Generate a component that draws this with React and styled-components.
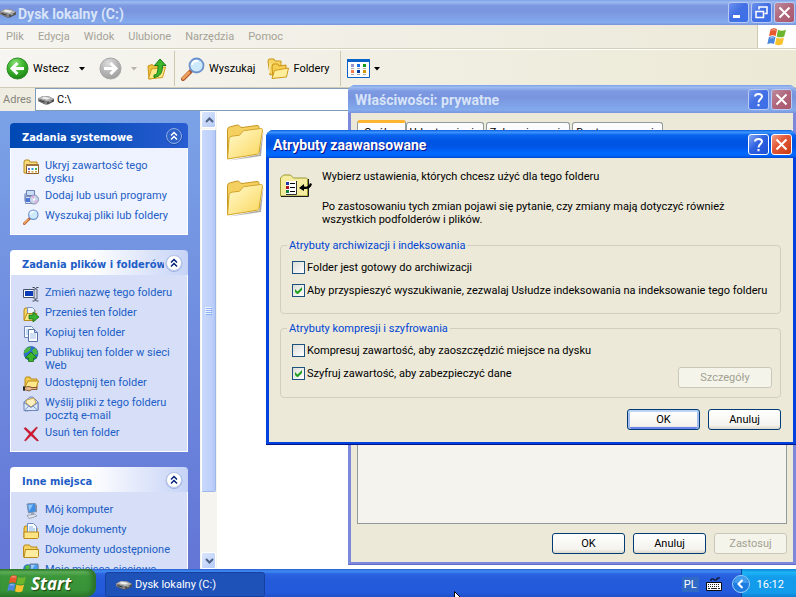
import React, { useState } from 'react'
import styled, { createGlobalStyle, css } from 'styled-components'

const uiFont = 'Roboto, "DejaVu Sans Condensed", sans-serif'
const headingFont = '"DejaVu Sans Condensed", "DejaVu Sans", sans-serif'
const titleFont = 'Roboto, "Open Sans", sans-serif'
const startFont = '"Open Sans", "Noto Sans", sans-serif'

const GlobalStyle = createGlobalStyle`
    * {
        box-sizing: border-box;
    }
    body {
        margin: 0;
        overflow: hidden;
        font-family: ${uiFont};
        font-size: 11px;
        line-height: 13px;
        color: #000000;
    }
    button, input {
        font: inherit;
        color: inherit;
    }
    svg {
        display: block;
        flex-shrink: 0;
    }
    p, h2, ul {
        margin: 0;
        padding: 0;
    }
`

const Desktop = styled.div`
    position: relative;
    height: 100vh;
    display: flex;
    flex-direction: column;
    overflow: hidden;
    background: #ffffff;
`

/* ---------- explorer window ---------- */

const Explorer = styled.main`
    flex: 1;
    min-height: 0;
    display: flex;
    flex-direction: column;
`

const TitleBar = styled.header`
    display: flex;
    align-items: center;
    flex-shrink: 0;
    gap: 2px;
    height: ${(props) => (props.$main ? 25 : 28)}px;
    padding: 0 ${(props) => (props.$main ? 1 : 4)}px 0 ${(props) => (props.$main ? 0 : 7)}px;
    border-radius: ${(props) => (props.$main ? '0' : '7px 7px 0 0')};
    font-family: ${titleFont};
    color: ${(props) => (props.$active ? '#ffffff' : '#d8e4f8')};
    text-shadow: ${(props) => (props.$active ? '1px 1px 0 #0f1089' : 'none')};
    background: ${(props) => props.$active
        ? 'linear-gradient(#0a5be0, #3c96ff 8%, #0a64ee 18%, #0054e3 40%, #0055e5 60%, #0067ff 80%, #0066fb 92%, #0046d0)'
        : 'linear-gradient(#7ba0ea, #9dbcf0 8%, #7d99e2 22%, #7a95df 45%, #7fa3e8 75%, #84abec 90%, #7a93df)'};
`

const Title = styled.h2`
    flex: 1;
    padding-top: 2px;
    font-size: 14px;
    line-height: 18px;
    font-weight: bold;
    white-space: nowrap;
`

const CaptionButton = styled.button`
    width: 21px;
    height: 21px;
    padding: 0;
    display: flex;
    align-items: center;
    justify-content: center;
    border: 1px solid ${(props) => (props.$active ? '#ffffff' : '#b9cbf3')};
    border-radius: 3px;
    background: ${(props) => {
        if (props.$close) {
            return props.$active
                ? 'linear-gradient(135deg, #f0a088, #e4593a 40%, #c83c12)'
                : 'linear-gradient(135deg, #bd8a9e, #b0667c 50%, #a9576b)'
        }
        return props.$active
            ? 'linear-gradient(135deg, #86a9f5, #2f62e0 45%, #1d50d6)'
            : 'linear-gradient(135deg, #6e93ee, #4370e4 45%, #3b6fe8)'
    }};
`

const MenuBar = styled.nav`
    display: flex;
    flex-shrink: 0;
    height: 24px;
    background: linear-gradient(90deg, #f5f4f0, #ece9d8);
    border-bottom: 1px solid #d6d0b8;
`

const MenuItem = styled.button`
    padding: 0 7px;
    border: none;
    background: none;
    color: #a5a297;
    &:first-child {
        padding-left: 6px;
    }
`

const Brand = styled.div`
    width: 39px;
    margin-left: auto;
    display: flex;
    align-items: center;
    justify-content: center;
    background: #ffffff;
    border-left: 1px solid #d0caae;
`

const Toolbar = styled.div`
    display: flex;
    align-items: center;
    flex-shrink: 0;
    height: 39px;
    padding-left: 6px;
    background: linear-gradient(90deg, #f6f5f1, #ece9d5);
    border-bottom: 1px solid #d0cbb8;
    border-top: 1px solid #ffffff;
`

const ToolButton = styled.button`
    display: flex;
    align-items: center;
    gap: 4px;
    padding: 0;
    margin-right: ${(props) => props.$after || 0}px;
    border: none;
    background: none;
`

const Separator = styled.div`
    width: 1px;
    height: 35px;
    margin-right: 6px;
    background: #cdc8ae;
`

const AddressBar = styled.div`
    display: flex;
    flex-shrink: 0;
    height: 23px;
    background: #efede2;
`

const AddressLabel = styled.label`
    width: 35px;
    padding: 5px 0 0 3px;
    color: #86847a;
`

const AddressField = styled.div`
    flex: 1;
    display: flex;
    align-items: center;
    gap: 3px;
    padding-left: 2px;
    background: #ffffff;
    border: 1px solid #7f9db9;
    border-right: none;
`

const AddressInput = styled.input`
    flex: 1;
    height: 18px;
    padding: 0;
    border: none;
    outline: none;
    background: none;
`

const Content = styled.div`
    flex: 1;
    min-height: 0;
    display: flex;
    overflow: hidden;
`

const Sidebar = styled.aside`
    width: 200px;
    flex-shrink: 0;
    padding: 12px 12px 0 10px;
    overflow: hidden;
    display: flex;
    flex-direction: column;
    gap: 15px;
    background: linear-gradient(#7ba2e7, #6375d6);
`

const Panel = styled.section`
    flex-shrink: 0;
`

const PanelHeader = styled.div`
    height: 25px;
    display: flex;
    align-items: center;
    padding: 0 4px 0 12px;
    border-radius: 4px 4px 0 0;
    color: ${(props) => (props.$primary ? '#ffffff' : '#215dc6')};
    background: ${(props) => props.$primary
        ? 'linear-gradient(90deg, #0049b5, #0d50bc 50%, #2a5cd2)'
        : 'linear-gradient(90deg, #ffffff 45%, #c6d3f7)'};
`

const PanelTitle = styled.h2`
    flex: 1;
    padding-top: 3px;
    overflow: hidden;
    white-space: nowrap;
    font-family: ${headingFont};
    font-size: 11px;
    line-height: 15px;
    font-weight: bold;
`

const CollapseButton = styled.button`
    width: 20px;
    height: 20px;
    padding: 0;
    border: none;
    background: none;
`

const PanelBody = styled.ul`
    display: flex;
    flex-direction: column;
    gap: 4px;
    padding: 11px 12px 9px 12px;
    list-style: none;
    border: 1px solid #ffffff;
    border-top: none;
    background: ${(props) => (props.$primary ? '#eff3ff' : '#d6dff7')};
`

const TaskItem = styled.li`
    display: flex;
    gap: 6px;
`

const TaskLink = styled.a`
    color: #215dc6;
    text-decoration: none;
`

const ScrollBar = styled.div`
    width: 17px;
    flex-shrink: 0;
    display: flex;
    flex-direction: column;
    padding: 0 1px;
    background: #f5f4ef;
`

const ScrollButton = styled.button`
    height: 17px;
    padding: 0 0 0 3px;
    border: 1px solid #ffffff;
    border-radius: 2px;
    background: linear-gradient(135deg, #dce6fe, #b6cbf8);
    flex-shrink: 0;
`

const ScrollTrack = styled.div`
    flex: 1;
    padding: 1px 0 60px;
    display: flex;
`

const ScrollThumb = styled.div`
    flex: 1;
    display: flex;
    align-items: center;
    justify-content: center;
    border: 1px solid #9fb8ea;
    border-top-color: #ffffff;
    border-left-color: #ffffff;
    border-radius: 2px;
    background: linear-gradient(90deg, #c9d8fc, #bfd1fb 70%, #b4c8f6);
`

const FileArea = styled.section`
    flex: 1;
    padding: 11px 8px;
    display: flex;
    flex-direction: column;
    gap: 16px;
    background: #ffffff;
`

/* ---------- dialogs ---------- */

const Dialog = styled.section`
    position: absolute;
    top: ${(props) => props.$top}px;
    left: ${(props) => props.$left}px;
    right: 0;
    display: flex;
    flex-direction: column;
    border-radius: 8px 8px 0 0;
    background: ${(props) => (props.$active ? '#0042dd' : '#7b88dc')};
    box-shadow: inset 0 -1px 0 ${(props) => (props.$active ? '#00138c' : '#5f6cc8')};
    ${(props) => props.$bottom && css`
        bottom: ${props.$bottom}px;
    `}
`

const DialogBody = styled.div`
    flex: 1;
    display: flex;
    flex-direction: column;
    margin: 0 3px 3px;
    padding: ${(props) => props.$pad};
    background: #ece9d8;
`

const Tabs = styled.div`
    display: flex;
    align-items: flex-end;
    flex-shrink: 0;
    height: 22px;
`

const Tab = styled.button`
    height: ${(props) => (props.$selected ? 22 : 20)}px;
    padding: 0 ${(props) => (props.$selected ? 6 : 3)}px;
    margin-right: ${(props) => (props.$selected ? 0 : 2)}px;
    border: 1px solid #919b9c;
    border-bottom: none;
    border-radius: 3px 3px 0 0;
    background: #fcfcfe;
    white-space: nowrap;
    ${(props) => props.$selected && css`
        border-top: 3px solid #ffb433;
    `}
`

const TabPane = styled.div`
    flex: 1;
    border: 1px solid #919b9c;
    background: #f4f3ee;
`

const Actions = styled.div`
    display: flex;
    justify-content: flex-end;
    flex-shrink: 0;
    gap: 8px;
    margin-top: ${(props) => props.$gap}px;
`

const PushButton = styled.button`
    width: ${(props) => (props.$wide ? 94 : 73)}px;
    height: 21px;
    padding: 0;
    border: 1px solid #003c74;
    border-radius: 3px;
    background: linear-gradient(#ffffff, #f4f3ee 80%, #dcd8cc);
    ${(props) => props.$default && css`
        box-shadow: inset 0 2px 0 #bcd4f6, inset 2px 0 0 #a4bdee, inset -2px 0 0 #a4bdee, inset 0 -2px 0 #6982ee;
    `}
    &:disabled {
        color: #a1a192;
        border-color: #c9c7ba;
        background: #f5f4ea;
    }
`

const Intro = styled.div`
    display: flex;
    gap: 10px;
    margin-bottom: 13px;
`

const IntroText = styled.div`
    display: flex;
    flex-direction: column;
    gap: 17px;
`

const Group = styled.fieldset`
    display: flex;
    flex-direction: column;
    gap: 10px;
    min-width: 0;
    margin: 0 0 8px;
    padding: 9px 8px ${(props) => props.$bottom}px 6px;
    border: 1px solid #d0d0bf;
    border-radius: 4px;
`

const Legend = styled.legend`
    padding: 0 2px;
    color: #0046d5;
`

const GroupRow = styled.div`
    display: flex;
    justify-content: space-between;
    align-items: flex-start;
    padding-left: 5px;
`

const CheckLabel = styled.label`
    display: flex;
    gap: 2px;
    white-space: nowrap;
`

const CheckBox = styled.input`
    appearance: none;
    width: 13px;
    height: 13px;
    flex-shrink: 0;
    margin: 0;
    border: 1px solid #1c5180;
    background: linear-gradient(135deg, #dcdcd7, #ffffff);
    &:checked {
        background: url("data:image/svg+xml,%3Csvg xmlns='http://www.w3.org/2000/svg' viewBox='0 0 11 11'%3E%3Cpath d='M2 4v3l2 2h1l4-4V2L4.500 6.500z' fill='%2321a121'/%3E%3C/svg%3E"), linear-gradient(135deg, #dcdcd7, #ffffff);
    }
`

/* ---------- taskbar ---------- */

const TaskBar = styled.footer`
    position: relative;
    display: flex;
    flex-shrink: 0;
    height: 28px;
    color: #ffffff;
    background: linear-gradient(#2a5fd0, #3f8cf3 8%, #2a63e0 18%, #245bdb 40%, #235adb 85%, #1e50c5);
`

const StartButton = styled.button`
    width: 96px;
    padding: 2px 0 0 7px;
    display: flex;
    align-items: center;
    gap: 4px;
    border: none;
    border-radius: 0 8px 10px 0;
    font-family: ${startFont};
    font-size: 17px;
    line-height: 20px;
    font-style: italic;
    font-weight: bold;
    text-shadow: 1px 1px 1px #1c3f10;
    background: linear-gradient(#2f7a2c, #62b45c 10%, #3c963a 25%, #389438 75%, #2c7a2b);
    box-shadow: inset -4px 0 5px #2a6f2a;
`

const TaskButton = styled.button`
    width: 160px;
    height: 25px;
    margin: 3px 0 0 9px;
    padding: 0 0 0 10px;
    display: flex;
    align-items: center;
    gap: 3px;
    border: 1px solid #15409f;
    border-radius: 3px;
    background: #1e52b9;
`

const TrayTools = styled.div`
    margin-left: auto;
    display: flex;
    align-items: center;
    gap: 7px;
    padding: 2px 18px 0 0;
`

const Language = styled.span`
    padding: 1px 2px;
    background: #316ac5;
`

const Tray = styled.div`
    display: flex;
    align-items: center;
    padding: 2px 12px 0 0;
    background: linear-gradient(#0d84d8, #1cb4f4 12%, #139bec 30%, #129aeb 85%, #0f7fd2);
    border-left: 1px solid #0c4a9c;
    svg {
        margin: 0 7px 0 -10px;
    }
`

const Pointer = styled.svg`
    position: absolute;
    left: 454px;
    bottom: -13px;
`

/* ---------- icons ---------- */

const Disk = () => (
    <svg width="16" height="16" viewBox="0 0 16 16">
        <path d="M0 6.500l5-2.500 6 .5 5 2.500v2.500l-6 3H7L0 9z" fill="#505050" />
        <path d="M0 6.500l5-2.500 6 .5 5 2.500-6 2.500z" fill="#b4b4b4" />
        <path d="M3 6.300l3-1.500 4 .6 2 1.200-3 1z" fill="#efefef" />
        <path d="M0 6.500l9 2.700v2.800H7L0 9z" fill="#858585" />
        <path d="M1.500 8.500l5 1.600" stroke="#333333" />
        <path d="M11 10l2.500-1.200" stroke="#a8bca8" />
    </svg>
)

const Flag = ({ size = 20 }) => (
    <svg width={size} height={size} viewBox="0 0 20 20">
        <path d="M3.500 2.500C6 .8 8 1 10 2.200L8.700 9C6.500 7.800 4.600 8 2 9.300z" fill="#e8582a" />
        <path d="M11 2.700c2.500 1.300 5 1.200 8 0l-1.800 6.800c-2.700 1.100-5 1.200-7.500 0z" fill="#6cb52d" />
        <path d="M1.800 10.300c2.400-1.300 4.500-1.300 6.700-.2L7 17c-2-1.200-4.200-1-6.700.3z" fill="#4a87dc" />
        <path d="M9.500 10.600c2.500 1.200 5 1.200 7.500.1l-1.600 6.600c-2.600 1.300-5 1.200-7.400 0z" fill="#f8c22c" />
        <path d="M4.500 3.400c1.600-.8 3-.8 4.300-.2M3 11.200c1.500-.7 2.800-.7 4-.2" stroke="#ffffff" strokeOpacity=".5" fill="none" />
    </svg>
)

const Arrow = ({ forward }) => (
    <svg width="23" height="23" viewBox="0 0 23 23">
        <defs>
            <radialGradient id={forward ? 'fwd' : 'back'} cx=".4" cy=".25" r=".8">
                <stop offset="0" stopColor={forward ? '#dddddd' : '#8fe07c'} />
                <stop offset=".5" stopColor={forward ? '#b9b9b9' : '#3cb42c'} />
                <stop offset="1" stopColor={forward ? '#9c9c9c' : '#1a7d12'} />
            </radialGradient>
        </defs>
        <circle cx="11.500" cy="11.500" r="10.500" fill={`url(#${forward ? 'fwd' : 'back'})`} stroke={forward ? '#a6a6a6' : '#2b8b22'} />
        <path
            d={forward ? 'M5 11.500h12M11.500 6l5.500 5.500-5.500 5.500' : 'M18 11.500H6M11.500 6L6 11.500l5.500 5.500'}
            fill="none"
            stroke="#ffffff"
            strokeWidth="3"
        />
    </svg>
)

const Caret = ({ color = '#000000' }) => (
    <svg width="6" height="4" viewBox="0 0 6 4">
        <path d="M0 0h6L3 3.500z" fill={color} />
    </svg>
)

const UpFolder = () => (
    <svg width="20" height="22" viewBox="0 0 20 22">
        <path d="M1 8l4-1.500 2 1.500 6-1v12L2 21z" fill="#f0c040" stroke="#c99418" />
        <path d="M1.500 21l3-10 14-2-3 10.500z" fill="#ffe88a" stroke="#cf9b1d" />
        <path d="M7 17c3.500 0 4-4 4-9.500H7.500L13 1l6 6.500h-3.500c0 7-2 11-8.500 12z" fill="#3db52c" stroke="#1c7a14" />
    </svg>
)

const Search = ({ size = 24 }) => (
    <svg width={size} height={size} viewBox="0 0 24 24">
        <path d="M2 22l8-8" stroke="#a8522a" strokeWidth="4" strokeLinecap="round" />
        <path d="M2 21.500l6-6" stroke="#f0a05a" strokeWidth="2.500" strokeLinecap="round" />
        <circle cx="15.500" cy="8.500" r="7" fill="#cdeafc" stroke="#6d92cc" strokeWidth="1.800" />
        <path d="M11 8c.5-3 3-4.500 6-4" stroke="#ffffff" strokeWidth="2" fill="none" />
    </svg>
)

const Folders = () => (
    <svg width="22" height="22" viewBox="0 0 22 22">
        <path d="M1 3l1-2h5l1 2h6v12l-11 2z" fill="#f7d562" stroke="#c99418" />
        <path d="M5 9l1-3h5l1 2 7-1v11l-13 2z" fill="#f6cf52" stroke="#c99418" />
        <path d="M5 20.500l2.500-8 14-2.500-2 9z" fill="#ffee9c" stroke="#cf9b1d" />
        <path d="M2.500 15l.5-10" stroke="#fff2b0" />
    </svg>
)

const Views = () => (
    <svg width="23" height="19" viewBox="0 0 23 19">
        <path d="M.5.500h22v18H.5z" fill="#ffffff" stroke="#0b62c8" />
        <path d="M0 0h23v3H0z" fill="#0b62c8" />
        <path d="M4 5h3v3H4z" fill="#9b93cc" />
        <path d="M10 5h3v3h-3z" fill="#1d6fe8" />
        <path d="M16 5h3v3h-3z" fill="#139a12" />
        <path d="M4 11h3v3H4z" fill="#ff7a4a" />
        <path d="M10 11h3v3h-3z" fill="#0b3aa0" />
        <path d="M16 11h3v3h-3z" fill="#cf9a00" />
        <path d="M4 9.500h3M10 9.500h3M16 9.500h3M4 15.500h3M10 15.500h3M16 15.500h3" stroke="#aaaaaa" />
    </svg>
)

const BigFolder = () => (
    <svg width="39" height="40" viewBox="0 0 39 40">
        <defs>
            <linearGradient id="bigFolder" x1="0" y1="0" x2="1" y2="1">
                <stop offset="0" stopColor="#fffbcf" />
                <stop offset="1" stopColor="#fbd65c" />
            </linearGradient>
        </defs>
        <path d="M4 38.500l30-6L38.500 9 36 34z" fill="#777777" opacity=".6" />
        <path d="M2.500 36V8c0-2 1-3 3-3.300l7-1.700c2 0 2.500 2.500 4.500 2.500L32 3.500c1.500 0 2 .5 2 2V30z" fill="#f3d060" stroke="#c79620" />
        <path d="M2.500 37L4 17.500c.3-2 1-3 3-3.300l7.500-1 4-4.500L35.500 6.500c1.500-.2 2.300.5 2 2L34 30.500c-.3 1-.8 1.500-1.600 1.700z" fill="url(#bigFolder)" stroke="#d3a428" />
    </svg>
)

const Chevrons = ({ primary }) => (
    <svg width="20" height="20" viewBox="0 0 20 20">
        <circle cx="10" cy="10.500" r="8" fill="none" stroke={primary ? '#1c48a8' : '#9fb0dd'} />
        <circle cx="10" cy="10" r="7.500" fill={primary ? '#2f62c6' : '#ffffff'} stroke={primary ? '#8db0ee' : '#b8c6ea'} />
        <path d="M7 9.500l3-3 3 3M7 13.500l3-3 3 3" fill="none" stroke={primary ? '#ffffff' : '#00217a'} strokeWidth="1.500" />
    </svg>
)

const taskIcons = {
    hide: (
        <>
            <path d="M1 3l1-2h4l1 2h7v11H1z" fill="#f8dc7a" stroke="#b98a1c" />
            <path d="M3.500 5.500h12v9h-12z" fill="#ffffff" stroke="#8c5f2a" />
            <path d="M3 5h13v2H3z" fill="#a0743a" />
            <path d="M5 9h2v2H5z" fill="#6b6bd0" />
            <path d="M8.500 9h2v2h-2z" fill="#2f9ad8" />
            <path d="M12 9h2v2h-2z" fill="#49b04a" />
            <path d="M5 12h2v1.500H5z" fill="#e07a48" />
            <path d="M8.500 12h2v1.500h-2zM12 12h2v1.500h-2z" fill="#cfa840" />
        </>
    ),
    programs: (
        <>
            <path d="M1 5l3-2v11l-3-2z" fill="#9fb0d6" />
            <path d="M3.500 1.500h8v5h-8z" fill="#c9dcf8" stroke="#6a80b4" />
            <path d="M2.500 7.500h9v7h-9z" fill="#dde6f8" stroke="#7d8db8" />
            <circle cx="11" cy="10.500" r="4.500" fill="#c8d4e8" stroke="#8490b0" />
            <path d="M11 10.500l-3-3 3-1zM11 10.500l4 2-2 2z" fill="#e8a8e0" />
            <circle cx="11" cy="10.500" r="1.200" fill="#ffffff" />
            <path d="M3 9h4v4H3z" fill="#4a78d8" />
        </>
    ),
    rename: (
        <>
            <path d="M.5 3.500h11v8H.5z" fill="#ffffff" stroke="#44506e" />
            <path d="M2 5h8v5H2z" fill="#0d3cba" />
            <path d="M9.500 1.500h2l1 1 1-1h2M9.500 15h2l1-1 1 1h2M12.500 2v12" stroke="#3f4658" fill="none" />
            <path d="M11 3v10h3V3z" fill="#cfd5e4" stroke="#5d657c" />
        </>
    ),
    move: (
        <>
            <path d="M1 4l1-2h4l1 2h5v10H1z" fill="#f6d460" stroke="#b98a1c" />
            <path d="M4.500 1.500h5l2 2v6h-7z" fill="#eef4ff" stroke="#7d92c0" />
            <path d="M1 14.500l3-7h10l-2 7z" fill="#ffe88a" stroke="#b98a1c" />
            <path d="M6 9h4V6l6 5-6 5v-3H6z" fill="#38b030" stroke="#176e12" strokeWidth=".8" />
        </>
    ),
    copy: (
        <>
            <path d="M1.500.5h7l2 2v9h-9z" fill="#f4f8ff" stroke="#7088b8" />
            <path d="M5.500 3.500h6l3 3v9h-9z" fill="#ffffff" stroke="#5673ac" />
            <path d="M11.500 3.500v3h3" fill="#b8cbec" stroke="#5673ac" />
            <path d="M7 8h6M7 10h6M7 12h6M3 4h2M3 6h2M3 8h2" stroke="#9fc0ea" />
        </>
    ),
    publish: (
        <>
            <circle cx="8" cy="7.500" r="7" fill="#2b6fd0" stroke="#1d4a8c" strokeWidth=".6" />
            <path d="M3 2.500c2-1.500 4-1.500 5-1l-1 3-3 2-3 1c0-2 .6-3.500 2-5zM9 4l3-2c2 2 3 4 2.500 6L11 9z" fill="#4cba3c" />
            <path d="M8 6l6 6h-3.500v3.500h-5V12H2z" fill="#3cb42c" stroke="#1a6c14" strokeWidth=".8" />
        </>
    ),
    share: (
        <>
            <path d="M2 3l1-2h4l1 2h6v9H2z" fill="#f3cb4c" stroke="#b98a1c" />
            <path d="M2 11l3-6h10.500l-2.500 7z" fill="#ffe88a" stroke="#b98a1c" />
            <path d="M0 11h3l3-.5 3 1h5v2H9l-3 1.500-3-1H0z" fill="#e9b98a" stroke="#6e3f1c" strokeWidth=".8" />
            <path d="M0 10.500h2v4H0z" fill="#2a2a2a" />
        </>
    ),
    mail: (
        <>
            <path d="M1 6l6-5h3l5 5v8l-13 1z" fill="#c6d6f2" stroke="#6d86b8" />
            <path d="M3.500 4L11 2l2 5-5 4-5-4z" fill="#fff0c0" stroke="#c8a24c" />
            <path d="M1 6.500l7 5 7-5v8H1z" fill="#dce8fb" stroke="#6d86b8" />
            <path d="M1 14.500l5-4.500M15 14.500L10 10" stroke="#7f98c8" />
        </>
    ),
    remove: (
        <path d="M1 2.500l1.500-1L8 6.500 13.500 1l1 .6L9.500 8l6 6.500-1.500.5-6-5.500L2.500 15l-1-.6L6.500 8z" fill="#d8142c" stroke="#a30f22" strokeWidth=".5" />
    ),
    computer: (
        <>
            <path d="M4 1l8-1 1.500 8.500L5.500 10z" fill="#3f8fe8" stroke="#7f8fa8" />
            <path d="M5 2l5-.6L6.500 8z" fill="#8cc4fa" />
            <path d="M12.500 1l1.500 1v7l-1 .5z" fill="#8a94a8" />
            <path d="M8 9.500h3V12H8z" fill="#9aa4b8" />
            <path d="M4 12.500l8-1.500 2 2-8 2.500z" fill="#e2e6ee" stroke="#8a94a8" strokeWidth=".8" />
        </>
    ),
    documents: (
        <>
            <path d="M1 5l1-2h3l1 2h8v10H1z" fill="#f3cb4c" stroke="#b98a1c" />
            <path d="M4.500.5h6l3 3V11h-9z" fill="#ffffff" stroke="#6b8cc4" />
            <path d="M6 4h4M6 6h6M6 8h6" stroke="#7eb2ea" />
            <path d="M1 15.500V9h14.500v5.500l-1 1z" fill="#ffe484" stroke="#b98a1c" />
        </>
    ),
    folder: (
        <>
            <path d="M.5 14V4l1-2h5l1.500 2h6v10z" fill="#f6d460" stroke="#b98a1c" />
            <path d="M1 14.500l1.500-8H15.500v7l-1 1z" fill="#ffec9e" stroke="#b98a1c" />
        </>
    ),
    network: (
        <>
            <circle cx="5" cy="6" r="4.800" fill="#2d74cc" />
            <path d="M2 3l4-1 1 3-4 3zM3 9l3-2 1 3z" fill="#4cba3c" />
            <path d="M7 1h8l.5 7H8z" fill="#4a9cf0" stroke="#6c7c98" />
            <path d="M8 2l4 0-3.500 5z" fill="#9fd0fb" />
        </>
    ),
}

const TaskIcon = ({ name }) => name === 'search'
    ? <Search size={16} />
    : <svg width="16" height="16" viewBox="0 0 16 16">{taskIcons[name]}</svg>

const Glyph = ({ name }) => (
    <svg width="15" height="15" viewBox="0 0 15 15" fill="none" stroke="#ffffff" strokeWidth="2">
        {name === 'close' && <path d="M2.500 2.500l10 10M12.500 2.500l-10 10" />}
        {name === 'min' && <path d="M2 11.500h7" strokeWidth="3" />}
        {name === 'help' && <path d="M4 4.500C4 1 11 1 11 4.500c0 2.500-3.500 2.500-3.500 6M7.500 12v2.200" />}
        {name === 'restore' && (
            <>
                <path d="M5 4.500V2h8v6.500h-2.500" strokeWidth="1.500" />
                <path d="M2 6.500h7.500v6H2z" strokeWidth="1.500" />
            </>
        )}
    </svg>
)

const AttributesIcon = () => (
    <svg width="32" height="32" viewBox="0 0 32 32">
        <path d="M.5 26V8l3-3h7l3 3h13l1 1v17z" fill="#f5eca0" stroke="#9a9a30" />
        <path d="M1 26.500h27.500V9" fill="none" stroke="#1a1a1a" />
        <path d="M6 11h10v13H6z" fill="#ffffff" />
        <path d="M6 24.500h10.500V11" fill="none" stroke="#333333" />
        <path d="M6 12h3v3H6z" fill="#2038b0" />
        <path d="M6 16h3v3H6z" fill="#b01020" />
        <path d="M6 20h3v3H6z" fill="#108040" />
        <path d="M10 13.500h5M10 17.500h5M10 21.500h5" stroke="#000000" />
        <path d="M19 18l5-4v2.500c3 .5 5 0 6-3.500l2 1c-1 4-4 5.500-8 5V21z" fill="#000000" />
    </svg>
)

const Keyboard = () => (
    <svg width="17" height="15" viewBox="0 0 17 15">
        <path d="M5 4V2h3v1h3V1h3" fill="none" stroke="#0a0a0a" />
        <path d="M.5 5.500h15v8H.5z" fill="#ffffff" stroke="#0a0a0a" />
        <path d="M2 7.500h12M2 9.500h12" stroke="#222222" strokeDasharray="1 1" />
        <path d="M2 11.500h2M5 11.500h6M12 11.500h2" stroke="#222222" />
    </svg>
)

const TrayArrow = () => (
    <svg width="18" height="18" viewBox="0 0 18 18">
        <circle cx="9" cy="9" r="8.500" fill="#1c7ce0" stroke="#9fd2fa" />
        <path d="M2 8a7 7 0 0 1 14 0z" fill="#5db4f6" opacity=".6" />
        <path d="M10.500 5L6.500 9l4 4" fill="none" stroke="#ffffff" strokeWidth="2" />
    </svg>
)

const menus = ['Plik', 'Edycja', 'Widok', 'Ulubione', 'Narzędzia', 'Pomoc']

const panels = [
    {
        title: 'Zadania systemowe',
        primary: true,
        items: [
            ['hide', 'Ukryj zawartość tego dysku'],
            ['programs', 'Dodaj lub usuń programy'],
            ['search', 'Wyszukaj pliki lub foldery'],
        ],
    },
    {
        title: 'Zadania plików i folderów',
        items: [
            ['rename', 'Zmień nazwę tego folderu'],
            ['move', 'Przenieś ten folder'],
            ['copy', 'Kopiuj ten folder'],
            ['publish', 'Publikuj ten folder w sieci Web'],
            ['share', 'Udostępnij ten folder'],
            ['mail', 'Wyślij pliki z tego folderu pocztą e-mail'],
            ['remove', 'Usuń ten folder'],
        ],
    },
    {
        title: 'Inne miejsca',
        items: [
            ['computer', 'Mój komputer'],
            ['documents', 'Moje dokumenty'],
            ['folder', 'Dokumenty udostępnione'],
            ['network', 'Moje miejsca sieciowe'],
        ],
    },
]

const Caption = ({ name, label, active }) => (
    <CaptionButton aria-label={label} $active={active} $close={name === 'close'}>
        <Glyph name={name} />
    </CaptionButton>
)

const Check = ({ label, initial }) => {
    const [checked, setChecked] = useState(initial)
    return (
        <CheckLabel>
            <CheckBox type="checkbox" checked={checked} onChange={() => setChecked(!checked)} />
            {label}
        </CheckLabel>
    )
}

const ExplorerWindow = () => {
    const [address, setAddress] = useState('C:\\')

    return (
        <Explorer>
            <TitleBar $main>
                <Disk />
                <Title>Dysk lokalny (C:)</Title>
                <Caption name="min" label="Minimalizuj" />
                <Caption name="restore" label="Przywróć" />
                <Caption name="close" label="Zamknij" />
            </TitleBar>
            <MenuBar>
                {menus.map((menu) => <MenuItem key={menu}>{menu}</MenuItem>)}
                <Brand><Flag /></Brand>
            </MenuBar>
            <Toolbar>
                <ToolButton $after={10}><Arrow />Wstecz</ToolButton>
                <ToolButton $after={14} aria-label="Historia wstecz"><Caret /></ToolButton>
                <ToolButton $after={9} aria-label="Dalej"><Arrow forward /></ToolButton>
                <ToolButton $after={10} aria-label="Historia dalej"><Caret color="#b5b3a8" /></ToolButton>
                <ToolButton $after={7} aria-label="Do góry"><UpFolder /></ToolButton>
                <Separator />
                <ToolButton $after={12}><Search />Wyszukaj</ToolButton>
                <ToolButton $after={11}><Folders />Foldery</ToolButton>
                <Separator />
                <ToolButton aria-label="Widoki"><Views /><Caret /></ToolButton>
            </Toolbar>
            <AddressBar>
                <AddressLabel htmlFor="address">Adres</AddressLabel>
                <AddressField>
                    <Disk />
                    <AddressInput id="address" value={address} onChange={(e) => setAddress(e.target.value)} />
                </AddressField>
            </AddressBar>
            <Content>
                <Sidebar>
                    {panels.map((panel) => (
                        <Panel key={panel.title}>
                            <PanelHeader $primary={panel.primary}>
                                <PanelTitle>{panel.title}</PanelTitle>
                                <CollapseButton aria-label="Zwiń"><Chevrons primary={panel.primary} /></CollapseButton>
                            </PanelHeader>
                            <PanelBody $primary={panel.primary}>
                                {panel.items.map(([icon, text]) => (
                                    <TaskItem key={text}>
                                        <TaskIcon name={icon} />
                                        <TaskLink href="#">{text}</TaskLink>
                                    </TaskItem>
                                ))}
                            </PanelBody>
                        </Panel>
                    ))}
                </Sidebar>
                <ScrollBar>
                    <ScrollButton aria-label="W górę">
                        <svg width="9" height="6" viewBox="0 0 9 6"><path d="M1 5l3.500-3.500L8 5" fill="none" stroke="#4d6185" strokeWidth="2" /></svg>
                    </ScrollButton>
                    <ScrollTrack>
                        <ScrollThumb>
                            <svg width="7" height="8" viewBox="0 0 7 8">
                                <path d="M0 .5h6M0 2.500h6M0 4.500h6M0 6.500h6" stroke="#eef4fe" />
                                <path d="M1 1.500h6M1 3.500h6M1 5.500h6M1 7.500h6" stroke="#8cb0f8" />
                            </svg>
                        </ScrollThumb>
                    </ScrollTrack>
                    <ScrollButton aria-label="W dół">
                        <svg width="9" height="6" viewBox="0 0 9 6"><path d="M1 1l3.500 3.500L8 1" fill="none" stroke="#4d6185" strokeWidth="2" /></svg>
                    </ScrollButton>
                </ScrollBar>
                <FileArea>
                    <BigFolder />
                    <BigFolder />
                </FileArea>
            </Content>
        </Explorer>
    )
}

const PropertiesDialog = () => (
    <Dialog $top={85} $left={348} $bottom={32}>
        <TitleBar>
            <Title>Właściwości: prywatne</Title>
            <Caption name="help" label="Pomoc" />
            <Caption name="close" label="Zamknij" />
        </TitleBar>
        <DialogBody $pad="7px 6px 8px">
            <Tabs>
                <Tab $selected>Ogólne</Tab>
                <Tab>Udostępnianie</Tab>
                <Tab>Zabezpieczenia</Tab>
                <Tab>Dostosowywanie</Tab>
            </Tabs>
            <TabPane />
            <Actions $gap={9}>
                <PushButton>OK</PushButton>
                <PushButton>Anuluj</PushButton>
                <PushButton disabled>Zastosuj</PushButton>
            </Actions>
        </DialogBody>
    </Dialog>
)

const AttributesDialog = () => (
    <Dialog $top={130} $left={266} $active>
        <TitleBar $active>
            <Title>Atrybuty zaawansowane</Title>
            <Caption name="help" label="Pomoc" active />
            <Caption name="close" label="Zamknij" active />
        </TitleBar>
        <DialogBody $pad="12px 12px 12px 11px">
            <Intro>
                <AttributesIcon />
                <IntroText>
                    <p>Wybierz ustawienia, których chcesz użyć dla tego folderu</p>
                    <p>
                        Po zastosowaniu tych zmian pojawi się pytanie, czy zmiany mają dotyczyć również<br />
                        wszystkich podfolderów i plików.
                    </p>
                </IntroText>
            </Intro>
            <Group $bottom={16}>
                <Legend>Atrybuty archiwizacji i indeksowania</Legend>
                <GroupRow>
                    <Check label="Folder jest gotowy do archiwizacji" initial={false} />
                </GroupRow>
                <GroupRow>
                    <Check label="Aby przyspieszyć wyszukiwanie, zezwalaj Usłudze indeksowania na indeksowanie tego folderu" initial />
                </GroupRow>
            </Group>
            <Group $bottom={9}>
                <Legend>Atrybuty kompresji i szyfrowania</Legend>
                <GroupRow>
                    <Check label="Kompresuj zawartość, aby zaoszczędzić miejsce na dysku" initial={false} />
                </GroupRow>
                <GroupRow>
                    <Check label="Szyfruj zawartość, aby zabezpieczyć dane" initial />
                    <PushButton $wide disabled>Szczegóły</PushButton>
                </GroupRow>
            </Group>
            <Actions $gap={3}>
                <PushButton $default>OK</PushButton>
                <PushButton>Anuluj</PushButton>
            </Actions>
        </DialogBody>
    </Dialog>
)

const App = () => {
    return (
        <>
            <GlobalStyle />
            <Desktop>
                <ExplorerWindow />
                <TaskBar>
                    <StartButton><Flag />Start</StartButton>
                    <TaskButton><Disk />Dysk lokalny (C:)</TaskButton>
                    <TrayTools>
                        <Language>PL</Language>
                        <Keyboard />
                    </TrayTools>
                    <Tray>
                        <TrayArrow />
                        <time>16:12</time>
                    </Tray>
                    <Pointer width="12" height="19" viewBox="0 0 12 19">
                        <path d="M.5.500v16l4-4 3 6 2-1-3-6h5z" fill="#ffffff" stroke="#000000" />
                    </Pointer>
                </TaskBar>
                <PropertiesDialog />
                <AttributesDialog />
            </Desktop>
        </>
    )
}

export default App
